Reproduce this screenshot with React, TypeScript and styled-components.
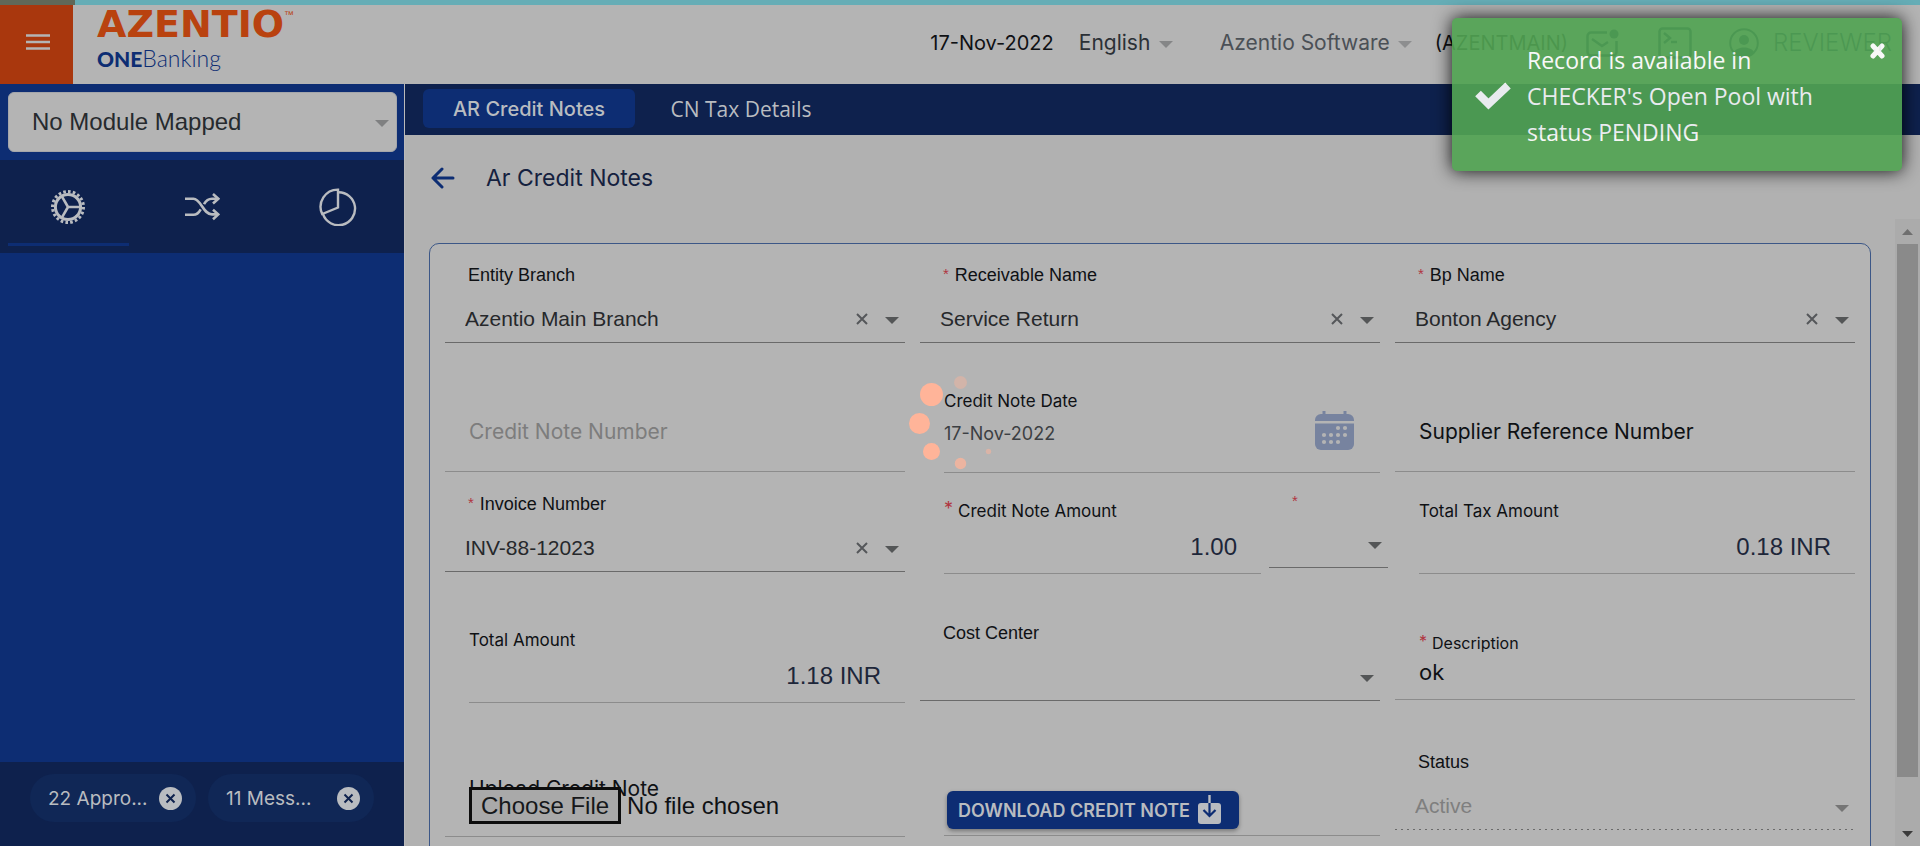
import React, { useId } from "react";
import type { ReactNode } from "react";
import styled, { createGlobalStyle, css } from "styled-components";

const c = {
  page: "#b1b1b1",
  surface: "#b4b4b4",
  navy: "#0e214d",
  blue: "#0d2d73",
  orange: "#b9420f",
  ink: "#0f1114",
  lineSoft: "#8c8c8c",
  lineStrong: "#6a6a6a",
  light: "#b9bcc0",
};

const inter = `Inter, "Liberation Sans", sans-serif`;
const arial = `"Liberation Sans", Arial, sans-serif`;
const segoe = `"Open Sans", "Noto Sans", sans-serif`;

const GlobalStyle = createGlobalStyle`
  *, *::before, *::after { box-sizing: border-box; }
  body { margin: 0; background: ${c.page}; font-family: ${inter}; color: ${c.ink}; overflow: hidden; }
  button, input, select { font: inherit; color: inherit; margin: 0; padding: 0; border: 0; background: none; border-radius: 0; outline: 0; }
  button { cursor: pointer; }
  svg { display: block; flex: none; }
`;

const Page = styled.div`
  position: relative;
  display: flex;
  flex-direction: column;
  height: 100vh;
`;

const ProgressStrip = styled.div`
  flex: none;
  height: 5px;
  background: linear-gradient(to right, #606858 75px, #66adb6 75px);
`;

const Header = styled.header`
  flex: none;
  display: flex;
  align-items: stretch;
  height: 79px;
  background: ${c.surface};
`;

const MenuButton = styled.button`
  display: grid;
  place-items: center;
  width: 73px;
  padding: 0 0 5px 2px;
  background: #a9370d;
  color: ${c.surface};
`;

const Brand = styled.a`
  display: flex;
  flex-direction: column;
  padding: 0 24px;
  color: ${c.blue};
  text-decoration: none;
`;

const BrandName = styled.span`
  display: flex;
  align-items: flex-start;
  height: 38px;
  font: 700 38px/38px "DejaVu Sans", sans-serif;
  color: ${c.orange};
`;

const TradeMark = styled.sup`
  margin-top: 5px;
  font: 400 10px/10px ${arial};
`;

const BrandProduct = styled.span`
  font: 300 23px/30px Lato, ${inter};
  b { font-weight: 900; font-size: 21px; }
`;

const HeaderTools = styled.div`
  display: flex;
  align-items: center;
  margin-left: auto;
  padding: 0 28px 4px 0;
  font-size: 20px;
`;

const BusinessDate = styled.time`
  margin-right: 25px;
`;

const HeaderPick = styled.span<{ $width: number; $tone: string; $after: number }>`
  position: relative;
  width: ${(p) => p.$width}px;
  margin-right: ${(p) => p.$after}px;
  font-size: 21px;
  color: ${(p) => p.$tone};
`;

const PlainSelect = styled.select`
  appearance: none;
  width: 100%;
  opacity: 1;
`;

const Caret = styled.svg<{ $right: number; $fill: string }>`
  position: absolute;
  top: 50%;
  right: ${(p) => p.$right}px;
  margin-top: -2px;
  fill: ${(p) => p.$fill};
  pointer-events: none;
`;

const ToolIcon = styled.button<{ $after: number }>`
  margin-right: ${(p) => p.$after}px;
  color: ${c.navy};
`;

const Tenant = styled.span`
  margin-right: 18px;
`;

const UserRole = styled.span`
  font-size: 24px;
  font-weight: 300;
  color: ${c.navy};
`;

const Body = styled.div`
  flex: 1;
  display: flex;
  min-height: 0;
`;

const Sidebar = styled.aside`
  flex: none;
  display: flex;
  flex-direction: column;
  width: 405px;
  border-right: 1px solid #bababa;
  background: ${c.blue};
`;

const ModulePicker = styled.div`
  position: relative;
  height: 60px;
  margin: 8px 7px 8px 8px;
  border-radius: 6px;
  border: 1px solid #a4a6ab;
  background: ${c.surface};
  color: #262a2e;
  font: 24px/58px ${arial};
  select { height: 58px; padding: 0 40px 0 23px; }
`;

const ModuleTabs = styled.nav`
  display: grid;
  grid-template-columns: repeat(3, 1fr);
  height: 93px;
  background: ${c.navy};
`;

const ModuleTab = styled.button<{ $active?: boolean }>`
  display: grid;
  place-items: center;
  margin: 0 6px 7px 8px;
  padding-top: 11px;
  border-bottom: 3px solid ${(p) => (p.$active ? c.blue : "transparent")};
  color: ${c.light};
`;

const SidebarFoot = styled.footer`
  display: flex;
  align-items: flex-start;
  gap: 12px;
  height: 84px;
  margin-top: auto;
  padding: 12px 30px;
  background: ${c.navy};
`;

const Chip = styled.div`
  flex: 1;
  display: flex;
  align-items: center;
  justify-content: space-between;
  height: 48px;
  padding: 0 14px 0 18px;
  border-radius: 24px;
  background: #102756;
  color: ${c.light};
  font-size: 19px;
`;

const Main = styled.main`
  flex: 1;
  display: flex;
  flex-direction: column;
  min-width: 0;
`;

const Tabs = styled.nav`
  flex: none;
  display: flex;
  height: 51px;
  padding: 5px 18px 7px;
  background: ${c.navy};
`;

const Tab = styled.button<{ $active?: boolean }>`
  width: 212px;
  border-radius: 6px;
  color: ${c.light};
  ${(p) =>
    p.$active
      ? css`
          background: ${c.blue};
          font: 500 20px/40px ${inter};
        `
      : css`
          font: 400 21px/40px ${segoe};
        `}
`;

const TitleBar = styled.div`
  flex: none;
  display: flex;
  align-items: center;
  gap: 31px;
  height: 84px;
  padding: 2px 0 0 26px;
`;

const BackButton = styled.button`
  color: ${c.blue};
`;

const Title = styled.h1`
  margin: 0;
  font-size: 23px;
  font-weight: 400;
  color: #15213f;
`;

const ScrollArea = styled.div`
  flex: 1;
  display: flex;
  min-height: 0;
`;

const Viewport = styled.div`
  flex: 1;
  min-width: 0;
  overflow: hidden;
  padding: 24px 24px 0;
`;

const ScrollTrack = styled.div`
  flex: none;
  display: flex;
  flex-direction: column;
  width: 25px;
  background: #ababab;
`;

const ScrollStep = styled.button<{ $fill: string }>`
  flex: none;
  display: grid;
  place-items: center;
  height: 25px;
  fill: ${(p) => p.$fill};
`;

const ScrollRail = styled.div`
  flex: 1;
  padding: 0 2px;
`;

const ScrollThumb = styled.div`
  height: 92.4%;
  background: #8a8a8a;
`;

const Form = styled.form`
  display: grid;
  grid-template-columns: repeat(3, minmax(0, 1fr));
  grid-template-rows: 130px 99px 129px 129px auto;
  column-gap: 15px;
  padding: 0 15px 40px;
  border: 1px solid #3c5787;
  border-radius: 10px;
  background: ${c.surface};
`;

const SelectBox = styled.div<{ $short?: boolean }>`
  align-self: start;
  display: flex;
  flex-direction: column;
  padding-top: ${(p) => (p.$short ? 18 : 20)}px;
`;

const SelectLabel = styled.label<{ $short?: boolean }>`
  min-height: 22px;
  margin-bottom: ${(p) => (p.$short ? 8 : 10)}px;
  padding-left: 23px;
  font: 18px/22px ${arial};
`;

const Star = styled.span<{ $size: number; $after: number }>`
  margin-right: ${(p) => p.$after}px;
  font-size: ${(p) => p.$size}px;
  vertical-align: 2px;
  line-height: 1;
  color: #b03540;
`;

const SelectControl = styled.div<{ $disabled?: boolean }>`
  position: relative;
  height: 47px;
  font: 21px/46px ${arial};
  select { height: 46px; padding: 0 60px 0 20px; }
  ${(p) =>
    p.$disabled
      ? css`
          color: #7f7f7f;
          background: linear-gradient(to right, ${c.lineStrong} 2px, transparent 2px) bottom left / 6px 1px repeat-x;
        `
      : css`
          color: #26282b;
          border-bottom: 1px solid ${c.lineStrong};
        `}
`;

const ClearButton = styled.button`
  position: absolute;
  top: 17px;
  right: 37px;
  color: #55575a;
`;

type Pads = { $top: number; $gap?: number; $bottom: number; $indent?: boolean };

const InputBox = styled.div<Pads>`
  align-self: start;
  position: relative;
  display: flex;
  flex-direction: column;
  row-gap: ${(p) => p.$gap ?? 0}px;
  min-width: 0;
  margin-left: ${(p) => (p.$indent ? 24 : 0)}px;
  padding: ${(p) => p.$top}px 24px ${(p) => p.$bottom}px ${(p) => (p.$indent ? 0 : 24)}px;
  border-bottom: 1px solid ${c.lineSoft};
`;

const InputLabel = styled.label<{ $size?: number }>`
  font-size: ${(p) => p.$size ?? 17}px;
  line-height: 22px;
`;

const TextInput = styled.input<{ $size: number; $tone?: string; $amount?: boolean }>`
  width: 100%;
  height: 36px;
  font-size: ${(p) => p.$size}px;
  color: ${(p) => p.$tone ?? c.ink};
  ${(p) =>
    p.$amount &&
    css`
      font-family: ${arial};
      text-align: right;
    `}
  &::placeholder { color: inherit; opacity: 1; }
`;

const CalendarButton = styled.button`
  position: absolute;
  right: 26px;
  bottom: 22px;
  color: #77839f;
`;

const AmountPair = styled.div`
  display: grid;
  grid-template-columns: minmax(0, 1fr) 119px;
  column-gap: 8px;
  margin-right: -8px;
`;

const FileInput = styled.input`
  position: relative;
  width: 100%;
  height: 37px;
  margin-top: -13px;
  font: 24px/31px ${arial};
  &::file-selector-button {
    height: 37px;
    margin: 0 6px 0 0;
    padding: 0 9px;
    border: 3px solid #0d0d0d;
    background: #a9a9a9;
    color: #16181a;
    font: 24px/31px ${arial};
  }
`;

const DownloadButton = styled.button`
  align-self: flex-start;
  display: flex;
  align-items: center;
  gap: 8px;
  height: 38px;
  margin-left: 3px;
  padding: 0 18px 0 11px;
  border-radius: 6px;
  background: ${c.blue};
  box-shadow: 0 2px 4px rgba(0, 0, 0, 0.35);
  color: ${c.light};
  font-size: 18px;
  font-weight: 600;
  white-space: nowrap;
`;

const Spinner = styled.svg`
  position: absolute;
  top: 50%;
  left: 50%;
  translate: -50% -50%;
  fill: #ffb499;
`;

const Toast = styled.div`
  position: absolute;
  top: 18px;
  right: 18px;
  display: flex;
  align-items: center;
  gap: 16px;
  width: 450px;
  padding: 24px 17px 21px 23px;
  border-radius: 5px;
  background: #52a453;
  box-shadow: 0 0 18px #000;
  color: #fff;
  opacity: 0.91;
`;

const ToastText = styled.p`
  flex: 1;
  margin: 0;
  padding-right: 40px;
  font: 23px/36px ${segoe};
`;

const ToastClose = styled.button`
  align-self: flex-start;
  margin-top: 1px;
`;

function DownCaret({ right, fill }: { right: number; fill: string }) {
  return (
    <Caret $right={right} $fill={fill} width="14" height="7" viewBox="0 0 14 7" aria-hidden="true">
      <path d="M0 0h14L7 7z" />
    </Caret>
  );
}

type SelectFieldProps = {
  label?: string;
  name?: string;
  value?: string;
  required?: boolean;
  clearable?: boolean;
  disabled?: boolean;
  short?: boolean;
};

function SelectField({ label, name, value = "", required, clearable, disabled, short }: SelectFieldProps) {
  const id = useId();
  return (
    <SelectBox $short={short}>
      <SelectLabel htmlFor={id} $short={short}>
        {required && <Star $size={15} $after={6}>*</Star>}
        {label}
      </SelectLabel>
      <SelectControl $disabled={disabled}>
        <PlainSelect id={id} defaultValue={value} disabled={disabled} aria-label={name}>
          <option>{value}</option>
        </PlainSelect>
        {clearable && (
          <ClearButton type="button" aria-label={`Clear ${label}`}>
            <svg width="12" height="12" viewBox="0 0 12 12" stroke="currentColor" strokeWidth="2">
              <path d="M1 1l10 10M11 1L1 11" />
            </svg>
          </ClearButton>
        )}
        <DownCaret right={6} fill={disabled ? "#757575" : "#545657"} />
      </SelectControl>
    </SelectBox>
  );
}

type InputFieldProps = {
  label: string;
  value: string;
  size: number;
  tone?: string;
  required?: boolean;
  amount?: boolean;
  indent?: boolean;
  top: number;
  gap: number;
  bottom: number;
  labelSize?: number;
  children?: ReactNode;
};

function InputField(p: InputFieldProps) {
  const id = useId();
  return (
    <InputBox $top={p.top} $gap={p.gap} $bottom={p.bottom} $indent={p.indent}>
      <InputLabel htmlFor={id} $size={p.labelSize}>
        {p.required && <Star $size={p.labelSize ?? 18} $after={5}>*</Star>}
        {p.label}
      </InputLabel>
      <TextInput id={id} defaultValue={p.value} $size={p.size} $tone={p.tone} $amount={p.amount} />
      {p.children}
    </InputBox>
  );
}

function AmountField({ label, value, required }: { label: string; value: string; required?: boolean }) {
  return (
    <InputField label={label} value={value} required={required} size={24} tone="#1d2639" amount indent top={27} gap={7} bottom={8} />
  );
}

function PlaceholderField({ label, tone }: { label: string; tone: string }) {
  return (
    <InputBox $top={39} $bottom={22}>
      <TextInput aria-label={label} placeholder={label} $size={21} $tone={tone} />
    </InputBox>
  );
}

function CogIcon() {
  return (
    <svg width="34" height="34" viewBox="0 0 34 34" fill="none" stroke="currentColor">
      <circle cx="17" cy="17" r="15.5" strokeWidth="3" pathLength="40" strokeDasharray="1.1 0.9" />
      <circle cx="17" cy="17" r="12.6" strokeWidth="3" />
      <path d="M17 17h12M17 17L11 6.6M17 17l-6 10.4" strokeWidth="2.6" />
    </svg>
  );
}

function ShuffleIcon() {
  return (
    <svg width="35" height="28" viewBox="0 0 35 28" fill="none" stroke="currentColor" strokeWidth="2.6">
      <path d="M0 5.7h8.5c7.5 0 9.5 15.7 18.5 15.7H33" />
      <path d="M0 21.8h8.5c3.5 0 5.6-2.6 7.2-5.5M19 11.2C20.7 8 23 5.7 27 5.7h6" />
      <path d="M28 1l5.3 4.7L28 10.5M28 16.7l5.3 4.7L28 26.2" />
    </svg>
  );
}

function PieIcon() {
  return (
    <svg width="38" height="38" viewBox="0 0 38 38" fill="none" stroke="currentColor" strokeWidth="2.4">
      <path d="M19 19.5V1.6A17.2 17.2 0 0 0 3.2 26z" />
      <path d="M19 4.2a16.5 16.5 0 1 1-15 22" />
    </svg>
  );
}

function CloseDisc() {
  return (
    <svg width="23" height="23" viewBox="0 0 23 23">
      <circle cx="11.5" cy="11.5" r="11.5" fill={c.light} />
      <path d="M7.5 7.5l8 8M15.5 7.5l-8 8" stroke={c.navy} strokeWidth="2" />
    </svg>
  );
}

function CalendarIcon() {
  const dots = [[23, 17], [30, 17], [9, 24], [16, 24], [23, 24], [30, 24], [9, 31], [16, 31], [23, 31]];
  return (
    <svg width="39" height="39" viewBox="0 0 39 39" fill="currentColor">
      <path d="M7.5 0h3v3h18V0h3v3H33a6 6 0 0 1 6 6v1H0V9a6 6 0 0 1 6-6h1.5z" />
      <path d="M0 12.5h39V33a6 6 0 0 1-6 6H6a6 6 0 0 1-6-6z" />
      {dots.map(([x, y]) => (
        <circle key={`${x}-${y}`} cx={x} cy={y} r="2.1" fill={c.surface} />
      ))}
    </svg>
  );
}

function DownloadIcon() {
  return (
    <svg width="23" height="30" viewBox="0 0 23 30" fill="none">
      <rect y="8" width="23" height="21" rx="3" fill={c.light} />
      <path d="M11.5 0v8" stroke={c.light} strokeWidth="2.4" />
      <path d="M11.5 8v12.5M5.5 15l6 6 6-6" stroke={c.blue} strokeWidth="2.2" />
    </svg>
  );
}

function ScrollBar() {
  return (
    <ScrollTrack>
      <ScrollStep type="button" aria-label="Scroll up" $fill="#6f6f6f">
        <svg width="11" height="6" viewBox="0 0 11 6"><path d="M5.5 0L11 6H0z" /></svg>
      </ScrollStep>
      <ScrollRail>
        <ScrollThumb />
      </ScrollRail>
      <ScrollStep type="button" aria-label="Scroll down" $fill="#3b3b3b">
        <svg width="11" height="6" viewBox="0 0 11 6"><path d="M0 0h11L5.5 6z" /></svg>
      </ScrollStep>
    </ScrollTrack>
  );
}

function TopBar() {
  return (
    <Header>
      <MenuButton aria-label="Menu">
        <svg width="24" height="16" viewBox="0 0 24 16" stroke="currentColor" strokeWidth="2.4">
          <path d="M0 1.5h24M0 8h24M0 14.5h24" />
        </svg>
      </MenuButton>
      <Brand href="#home">
        <BrandName>
          AZENTIO<TradeMark>™</TradeMark>
        </BrandName>
        <BrandProduct>
          <b>ONE</b>Banking
        </BrandProduct>
      </Brand>
      <HeaderTools>
        <BusinessDate>17-Nov-2022</BusinessDate>
        <HeaderPick $width={94} $after={47} $tone="#2b3036">
          <PlainSelect aria-label="Language"><option>English</option></PlainSelect>
          <DownCaret right={0} fill="#858687" />
        </HeaderPick>
        <HeaderPick $width={192} $after={23} $tone="#4b5056">
          <PlainSelect aria-label="Company"><option>Azentio Software</option></PlainSelect>
          <DownCaret right={0} fill="#8d8e8f" />
        </HeaderPick>
        <Tenant>(AZENTMAIN)</Tenant>
        <ToolIcon aria-label="Inbox" $after={39}>
          <svg width="33" height="28" viewBox="0 0 33 28" fill="none" stroke="currentColor" strokeWidth="2.5">
            <path d="M21 3.5H5a3.500 3.500 0 0 0-3.500 3.500v16A3.500 3.500 0 0 0 5 26.500h22a3.500 3.500 0 0 0 3.500-3.500V12M6 10l10 7 6-4" />
            <circle cx="28" cy="5" r="4.5" fill="currentColor" stroke="none" />
          </svg>
        </ToolIcon>
        <ToolIcon aria-label="Console" $after={37}>
          <svg width="34" height="32" viewBox="0 0 34 32" fill="none" stroke="currentColor" strokeWidth="2.5">
            <rect x="1.5" y="1.5" width="31" height="29" rx="3" />
            <path d="M6 6l6 5-6 5M13 15h6" />
          </svg>
        </ToolIcon>
        <ToolIcon aria-label="Account" $after={14}>
          <svg width="30" height="30" viewBox="0 0 30 30" fill="none" stroke="currentColor" strokeWidth="2">
            <circle cx="15" cy="15" r="13.8" />
            <circle cx="15" cy="12" r="5" fill="currentColor" stroke="none" />
            <path d="M5 24c3-6 17-6 20 0-5 6-15 6-20 0z" fill="currentColor" stroke="none" />
          </svg>
        </ToolIcon>
        <UserRole>REVIEWER</UserRole>
      </HeaderTools>
    </Header>
  );
}

function SideNav() {
  return (
    <Sidebar>
      <ModulePicker>
        <PlainSelect aria-label="Module"><option>No Module Mapped</option></PlainSelect>
        <DownCaret right={7} fill="#7f8081" />
      </ModulePicker>
      <ModuleTabs>
        <ModuleTab $active aria-label="Settings"><CogIcon /></ModuleTab>
        <ModuleTab aria-label="Transactions"><ShuffleIcon /></ModuleTab>
        <ModuleTab aria-label="Reports"><PieIcon /></ModuleTab>
      </ModuleTabs>
      <SidebarFoot>
        {["22 Appro...", "11 Mess..."].map((text) => (
          <Chip key={text}>
            <button>{text}</button>
            <button aria-label={`Dismiss ${text}`}><CloseDisc /></button>
          </Chip>
        ))}
      </SidebarFoot>
    </Sidebar>
  );
}

function CreditNoteForm() {
  return (
    <Form>
      <SelectField label="Entity Branch" value="Azentio Main Branch" clearable />
      <SelectField label="Receivable Name" value="Service Return" required clearable />
      <SelectField label="Bp Name" value="Bonton Agency" required clearable />

      <PlaceholderField label="Credit Note Number" tone="#7d7d7d" />
      <InputField label="Credit Note Date" value="17-Nov-2022" size={18} tone="#3c3f43" indent top={16} gap={3} bottom={21}>
        <CalendarButton type="button" aria-label="Pick date"><CalendarIcon /></CalendarButton>
      </InputField>
      <PlaceholderField label="Supplier Reference Number" tone={c.ink} />

      <SelectField label="Invoice Number" value="INV-88-12023" required clearable />
      <AmountPair>
        <AmountField label="Credit Note Amount" value="1.00" required />
        <SelectField name="Currency" required short />
      </AmountPair>
      <AmountField label="Total Tax Amount" value="0.18 INR" />

      <AmountField label="Total Amount" value="1.18 INR" />
      <SelectField label="Cost Center" />
      <InputField label="Description" value="ok" required size={22} labelSize={16} top={30} gap={0} bottom={9} />

      <InputBox $top={47} $bottom={12}>
        <InputLabel htmlFor="credit-note-file" $size={21}>Upload Credit Note</InputLabel>
        <FileInput id="credit-note-file" type="file" />
      </InputBox>
      <InputBox $top={60} $bottom={6} $indent>
        <DownloadButton type="button">
          DOWNLOAD CREDIT NOTE <DownloadIcon />
        </DownloadButton>
      </InputBox>
      <SelectField label="Status" value="Active" disabled />
    </Form>
  );
}

function LoadingDots() {
  return (
    <Spinner width="104" height="104" viewBox="0 0 104 104" role="img" aria-label="Loading">
      <circle cx="52.5" cy="11.5" r="6.5" opacity="0.4" />
      <circle cx="23.5" cy="23.5" r="11.5" />
      <circle cx="11.5" cy="52.5" r="10.5" />
      <circle cx="23.5" cy="80.5" r="8.5" />
      <circle cx="52.5" cy="92.5" r="5.7" opacity="0.75" />
      <circle cx="80.5" cy="80.5" r="2.7" opacity="0.5" />
    </Spinner>
  );
}

export default function App() {
  return (
    <Page>
      <GlobalStyle />
      <ProgressStrip />
      <TopBar />
      <Body>
        <SideNav />
        <Main>
          <Tabs>
            <Tab $active>AR Credit Notes</Tab>
            <Tab>CN Tax Details</Tab>
          </Tabs>
          <TitleBar>
            <BackButton aria-label="Back">
              <svg width="24" height="22" viewBox="0 0 24 22" fill="none" stroke="currentColor" strokeWidth="3" strokeLinecap="round" strokeLinejoin="round">
                <path d="M22 11H2M11 2l-9 9 9 9" />
              </svg>
            </BackButton>
            <Title>Ar Credit Notes</Title>
          </TitleBar>
          <ScrollArea>
            <Viewport>
              <CreditNoteForm />
            </Viewport>
            <ScrollBar />
          </ScrollArea>
        </Main>
      </Body>
      <LoadingDots />
      <Toast role="alert">
        <svg width="36" height="28" viewBox="0 0 36 28" fill="none" stroke="#fff" strokeWidth="8" aria-hidden="true">
          <path d="M3 11.5l10.5 10.5L33 3.5" strokeLinejoin="miter" />
        </svg>
        <ToastText>Record is available in CHECKER's Open Pool with status PENDING</ToastText>
        <ToastClose aria-label="Close">
          <svg width="15" height="16" viewBox="0 0 15 16" stroke="#fff" strokeWidth="5" strokeLinecap="round">
            <path d="M3 3l9 10M12 3L3 13" />
          </svg>
        </ToastClose>
      </Toast>
    </Page>
  );
}
